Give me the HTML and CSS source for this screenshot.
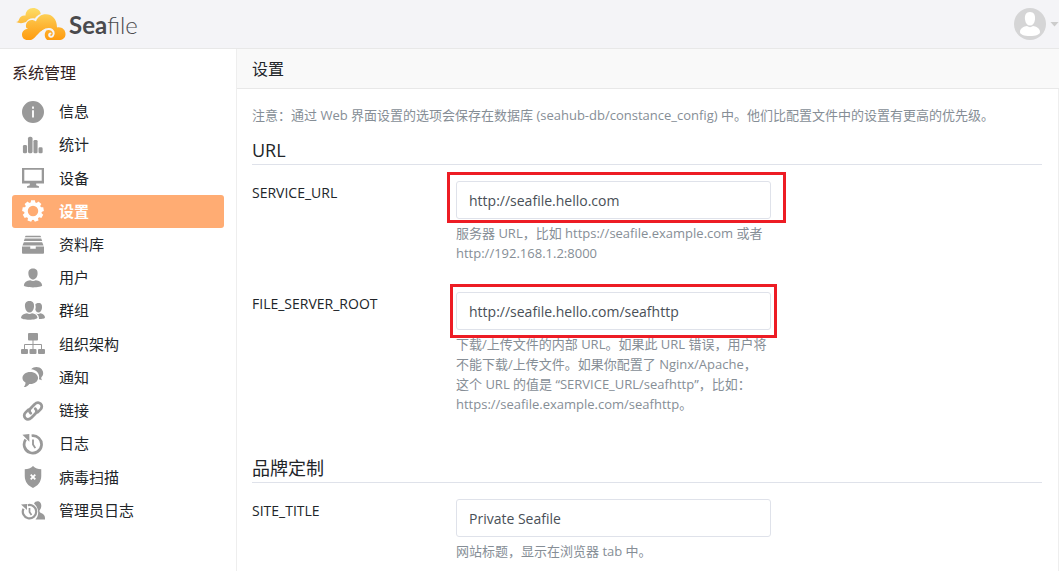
FILE: index.html
```html
<!DOCTYPE html>
<html lang="zh-CN">
<head>
<meta charset="utf-8">
<title>设置 - Seafile</title>
<link rel="stylesheet" href="styles.css">
</head>
<body>
<header class="topbar">
  <a class="logo" href="#" aria-label="Seafile">
    <svg class="logo-mark" viewBox="0 0 50 34" aria-hidden="true">
      <defs>
        <linearGradient id="sun" x1="0" y1="0" x2="0" y2="34" gradientUnits="userSpaceOnUse">
          <stop offset="0" stop-color="#fde06a"/><stop offset=".5" stop-color="#fdb93a"/><stop offset="1" stop-color="#ff9a0c"/>
        </linearGradient>
      </defs>
      <path fill="url(#sun)" d="M0 15C2 15 2.500 14 3 12.500C4 9 7 8 9.500 8.500C9.500 4 13 1 17 1C21 1 24.500 3.500 24.700 7C22 8 20 9.500 19 11.500C15.500 10.500 12 11.500 10 15C7 16.500 3 16.500 0 15Z"/>
      <path fill="url(#sun)" d="M10 20C9.500 16 12 13 15.700 13C17.500 13 18.500 13.500 20 14.500C21.500 10 25 7.300 30 7.300C36 7.300 41 12 41 20.500C45.500 19.500 49.500 22.500 49.500 27C49.500 31 46.500 33 43 33H11.500C8 33 6 30.500 6 27.500C6 24 9 22 12 22C11 21.500 10.200 21 10 20Z"/>
      <path class="logo-cut" d="M13 33.500C19 33.500 22 24 28.500 22.500L30.500 23.500C28 26 28 31 32 33.500Z"/>
      <path class="logo-curl" d="M27 24C31 21 36 21.500 37.500 25C38.500 28.500 36 30.500 34 29.500C32.500 28.500 33 26.500 34.500 26.500"/>
    </svg>
    <span class="wordmark"><b>Sea</b>file</span>
  </a>
  <button class="account" type="button" aria-label="帐号">
    <svg class="avatar" viewBox="0 0 32 32" aria-hidden="true">
      <circle cx="16" cy="16" r="16" fill="#d5d5d6"/>
      <path fill="#fff" d="M16 4C20 4 21.500 7 21 11.500C20.500 15.500 18.500 17.500 16 17.500S11.500 15.500 11 11.500C10.500 7 12 4 16 4ZM6 24C6 20 10 18.500 13 18C15 19.500 17 19.500 19 18C22 18.500 26 20 26 24C26 26.500 22 28 16 28S6 26.500 6 24Z"/>
    </svg>
    <span class="caret"></span>
  </button>
</header>
<div class="layout">
  <nav class="sidebar" aria-labelledby="nav-title">
    <h2 class="nav-title" id="nav-title">系统管理</h2>
    <ul class="nav-list">
      <li><a class="nav-item" href="#"><svg class="icon" viewBox="0 0 24 24"><path fill-rule="evenodd" d="M12 0a12 12 0 1 0 0 24a12 12 0 0 0 0-24ZM11 6h2v2.500h-2ZM11 10h2v8h-2Z"/></svg><span class="nav-text">信息</span></a></li>
      <li><a class="nav-item" href="#"><svg class="icon" viewBox="0 0 24 24"><rect x="1" y="12" width="4.500" height="9" rx="1.500"/><rect x="6.500" y="3" width="5" height="18" rx="2"/><rect x="12.500" y="6.500" width="4.500" height="14.500" rx="1.500"/><rect x="18" y="14.500" width="4.500" height="6.500" rx="1.500"/></svg><span class="nav-text">统计</span></a></li>
      <li><a class="nav-item" href="#"><svg class="icon" viewBox="0 0 24 24"><path fill-rule="evenodd" d="M0 1h24v17h-8.500v2l3 1v1.500h-13V21l3-1v-2H0ZM2.500 3v12h19V3Z"/></svg><span class="nav-text">设备</span></a></li>
      <li><a class="nav-item active" href="#" aria-current="page"><svg class="icon" viewBox="0 0 24 24"><circle cx="12" cy="12" r="7.700" fill="none" stroke="currentColor" stroke-width="4"/><path id="tooth" d="M9.300 4 9.900 .3h4.200l.6 3.700Z"/><use href="#tooth" transform="rotate(40 12 12)"/><use href="#tooth" transform="rotate(80 12 12)"/><use href="#tooth" transform="rotate(120 12 12)"/><use href="#tooth" transform="rotate(160 12 12)"/><use href="#tooth" transform="rotate(200 12 12)"/><use href="#tooth" transform="rotate(240 12 12)"/><use href="#tooth" transform="rotate(280 12 12)"/><use href="#tooth" transform="rotate(320 12 12)"/></svg><span class="nav-text">设置</span></a></li>
      <li><a class="nav-item" href="#"><svg class="icon" viewBox="0 0 24 24"><path fill-rule="evenodd" d="M4 2h16l1 1.500H3ZM3 5h18l1 2.500H2ZM2 9h20l1.500 3.500H.5ZM0 13.500h24v7a1 1 0 0 1-1 1H1a1 1 0 0 1-1-1ZM9 13.500V16h6v-2.500Z"/></svg><span class="nav-text">资料库</span></a></li>
      <li><a class="nav-item" href="#"><svg class="icon" viewBox="0 0 24 24"><path d="M12 1.500C16 1.500 17.300 4 17 7.500C16.700 11 14.500 13.500 12 13.500S7.300 11 7 7.500C6.700 4 8 1.500 12 1.500ZM2 20C2.500 16.500 5 15.200 9 14.500C11 15.500 13 15.500 15 14.500C19 15.200 21.500 16.500 22 20C22 23 2 23 2 20Z"/></svg><span class="nav-text">用户</span></a></li>
      <li><a class="nav-item" href="#"><svg class="icon icon-wide" viewBox="0 0 24 24"><path d="M8.500 2C12.300 2 13.300 4.500 13 8C12.700 11.500 10.700 13.500 8.500 13.500S4.300 11.500 4 8C3.700 4.500 4.700 2 8.500 2ZM0 18.500C.5 16 3 14.800 6 14.300C7.500 15.300 9.500 15.300 11 14.300C14 14.800 16 16 16.500 18.500C16.500 21.500 0 21.500 0 18.500ZM17.500 4C20.500 4 21.300 6 21 9C20.700 11.500 19.300 13.500 17.500 13.500C16 13.500 14.800 12.500 14.300 10.500C15 8.500 14.700 7 14.300 5.500C15 4.500 16 4 17.500 4ZM14.500 14.500C17 15.500 18.700 14.500 19.300 14.200C22 14.800 24 16 24 18.500C24 19.500 21 20 18 20C18 17 17 15.500 14.500 14.500Z"/></svg><span class="nav-text">群组</span></a></li>
      <li><a class="nav-item" href="#"><svg class="icon icon-wide" viewBox="0 0 24 24"><rect x="7" y="1" width="10" height="7.500" rx="1"/><path fill="none" stroke="currentColor" d="M12 8v9M3.500 17v-4.500h17V17"/><rect x="0" y="17" width="7" height="5" rx="1"/><rect x="8.500" y="17" width="7" height="5" rx="1"/><rect x="17" y="17" width="7" height="5" rx="1"/></svg><span class="nav-text">组织架构</span></a></li>
      <li><a class="nav-item" href="#"><svg class="icon" viewBox="0 0 24 24"><path d="M10 3.500C13 0 19 .5 21.500 3.500C24 7 23.500 10 21 12.500C20.800 14 21.500 15 22 15.500C20.500 15.500 19.500 15 18.500 14.500C20 8 15.500 4 10 3.500ZM9 6.500C14 6.500 17.500 9.500 17.500 13C17.500 17 13 20 8 19.500C6.500 21.500 4.500 23 2 23C3.500 21 4 19.500 3.800 18C1.500 16.500 .5 15 .5 13C.5 9.500 4 6.500 9 6.500Z"/></svg><span class="nav-text">通知</span></a></li>
      <li><a class="nav-item" href="#"><svg class="icon" viewBox="0 0 24 24"><g fill="none" stroke="currentColor" stroke-width="3" stroke-linecap="round"><path d="M9.500 14.500C7.500 12.500 8 10.500 9.500 9L13.500 5C16 2.500 18.500 2.500 20.300 4.200S22 8.500 20 10.500L17 13.500"/><path d="M14.500 9.500C16.500 11.500 16 13.500 14.500 15L10.500 19C8 21.500 5.500 21.500 3.700 19.800S2 15.500 4 13.500L7 10.500"/></g></svg><span class="nav-text">链接</span></a></li>
      <li><a class="nav-item" href="#"><svg class="icon" viewBox="0 0 24 24"><path fill="none" stroke="currentColor" stroke-width="3" d="M10.500 3a9.500 9.500 0 1 1-6.500 4"/><path d="M.5 2 8 1v8.500Z"/><path fill="none" stroke="currentColor" stroke-width="2" d="M12 7v5.500l2.500 4"/></svg><span class="nav-text">日志</span></a></li>
      <li><a class="nav-item" href="#"><svg class="icon" viewBox="0 0 24 24"><path d="M12 0C14.500 2.500 17.500 3.500 21 3.500V11C21 17.500 17 22 12 24C7 22 3 17.500 3 11V3.500C6.500 3.500 9.500 2.500 12 0Z"/><path stroke="#fff" stroke-width="2" d="m9.500 9.500 5 5m0-5-5 5"/></svg><span class="nav-text">病毒扫描</span></a></li>
      <li><a class="nav-item" href="#"><svg class="icon icon-wide" viewBox="0 0 24 24"><path d="M13 5.500C14 3.500 16 3 18 3.500C21 5 21 9.500 18.500 12.500C18 14.500 20 15 22 16C24 17.500 24 19 24 21.500H14.500C18.500 17 18 10 13 5.500Z"/><path fill="none" stroke="currentColor" stroke-width="2.200" d="M6.800 7.200a6.700 6.700 0 1 1-4.300 3.500"/><path d="M0 6.500 6 6v6Z"/><path fill="none" stroke="currentColor" stroke-width="1.700" d="M8.500 10v4l2 3"/></svg><span class="nav-text">管理员日志</span></a></li>
    </ul>
  </nav>
  <main class="main">
    <h1 class="page-title">设置</h1>
    <div class="content">
      <p class="note">注意：通过 Web 界面设置的选项会保存在数据库 (seahub-db/constance_config) 中。他们比配置文件中的设置有更高的优先级。</p>
      <section class="section">
        <h2 class="section-title">URL</h2>
        <div class="row">
          <label class="label" for="service-url">SERVICE_URL</label>
          <div class="field">
            <div class="control"><input class="input" id="service-url" type="text" value="http://seafile.hello.com"><span class="mark mark-wide"></span></div>
            <p class="help">服务器 URL，比如 https://seafile.example.com 或者 http://192.168.1.2:8000</p>
          </div>
        </div>
        <div class="row">
          <label class="label" for="file-root">FILE_SERVER_ROOT</label>
          <div class="field">
            <div class="control"><input class="input" id="file-root" type="text" value="http://seafile.hello.com/seafhttp"><span class="mark mark-tall"></span></div>
            <p class="help">下载/上传文件的内部 URL。如果此 URL 错误，用户将<br>不能下载/上传文件。如果你配置了 Nginx/Apache，<br>这个 URL 的值是 “SERVICE_URL/seafhttp”，比如：<br>https://seafile.example.com/seafhttp。</p>
          </div>
        </div>
      </section>
      <section class="section">
        <h2 class="section-title">品牌定制</h2>
        <div class="row">
          <label class="label" for="site-title">SITE_TITLE</label>
          <div class="field">
            <div class="control"><input class="input" id="site-title" type="text" value="Private Seafile"></div>
            <p class="help">网站标题，显示在浏览器 tab 中。</p>
          </div>
        </div>
      </section>
    </div>
  </main>
</div>
</body>
</html>
```
FILE: styles.css
```css
* { box-sizing: border-box; }
html, body { height: 100%; }
body {
  margin: 0;
  display: flex;
  flex-direction: column;
  overflow: hidden;
  background: #fff;
  color: #212529;
  font-family: "Open Sans", "Noto Sans CJK SC", sans-serif;
  font-size: 14px;
}
h1, h2, p, ul { margin: 0; padding: 0; font-weight: 400; }
.topbar {
  flex: none;
  display: flex;
  justify-content: space-between;
  align-items: center;
  height: 49px;
  padding-left: 16px;
  background: #f4f4f7;
  border-bottom: 1px solid #e8e8e8;
}
.logo { display: flex; align-items: center; gap: 3px; color: #4a4a4d; text-decoration: none; }
.logo-mark { width: 50px; height: 34px; }
.logo-cut { fill: #f4f4f7; }
.logo-curl { fill: none; stroke: #f4f4f7; stroke-width: 2px; stroke-linecap: round; }
.wordmark { padding-top: 2px; font-family: Lato, sans-serif; font-size: 24px; font-weight: 300; line-height: 32px; }
.wordmark b { font-weight: 700; }
.account { display: flex; align-items: center; gap: 4px; padding: 0; border: 0; background: none; overflow: hidden; }
.avatar { width: 32px; height: 32px; }
.caret { width: 9px; height: 5px; background: #ccc; clip-path: polygon(0 0, 100% 0, 50% 100%); }
.layout { flex: 1; display: flex; min-height: 0; }
.sidebar { flex: none; width: 237px; padding: 12px 12px 0; border-right: 1px solid #eee; }
.nav-title { font-size: 16px; line-height: 24px; color: #322; }
.nav-list { display: grid; grid-auto-rows: 1fr; height: 432px; margin-top: 10px; list-style: none; }
.nav-item {
  display: flex;
  align-items: center;
  gap: 15px;
  height: 100%;
  padding-left: 10px;
  border-radius: 3px;
  color: #212529;
  font-size: 15px;
  text-decoration: none;
}
.nav-text { padding-bottom: 2px; }
.icon { width: 22px; height: 22px; color: #999; fill: currentColor; }
.icon-wide { width: 24px; height: 24px; margin: 0 -1px; }
.nav-item.active { background: #ffac73; color: #fff; font-weight: 700; }
.active .icon { color: #fff; }
.main { flex: 1; min-width: 0; display: flex; flex-direction: column; }
.page-title {
  flex: none;
  padding: 8px 15px 7px;
  background: #f9f9f9;
  border-bottom: 1px solid #e8e8e8;
  font-size: 16px;
  line-height: 24px;
}
.content { flex: 1; min-height: 0; padding: 16px 16px 0 15px; border-right: 1px solid #eee; }
.note, .help { color: #868e96; font-size: 13px; line-height: 20px; }
.section { margin-bottom: 41px; }
.section-title {
  margin: 12px 0 16px;
  padding-bottom: 1px;
  border-bottom: 1px solid #dfe2ea;
  font-size: 18px;
  line-height: 26px;
}
.row { display: flex; margin-bottom: 29px; }
.label { flex: none; width: 204px; line-height: 24px; }
.field { width: 315px; }
.control { position: relative; }
.input {
  display: block;
  width: 100%;
  height: 38px;
  padding: 0 12px;
  border: 1px solid #dfe2ea;
  border-radius: 3px;
  background: #fff;
  color: #495057;
  font: inherit;
}
.help { margin-top: 4px; }
.mark { position: absolute; border: 3px solid #ed1c24; pointer-events: none; }
.mark-wide { inset: -9px -15px -4px -9px; }
.mark-tall { inset: -8px -6px; }
```
